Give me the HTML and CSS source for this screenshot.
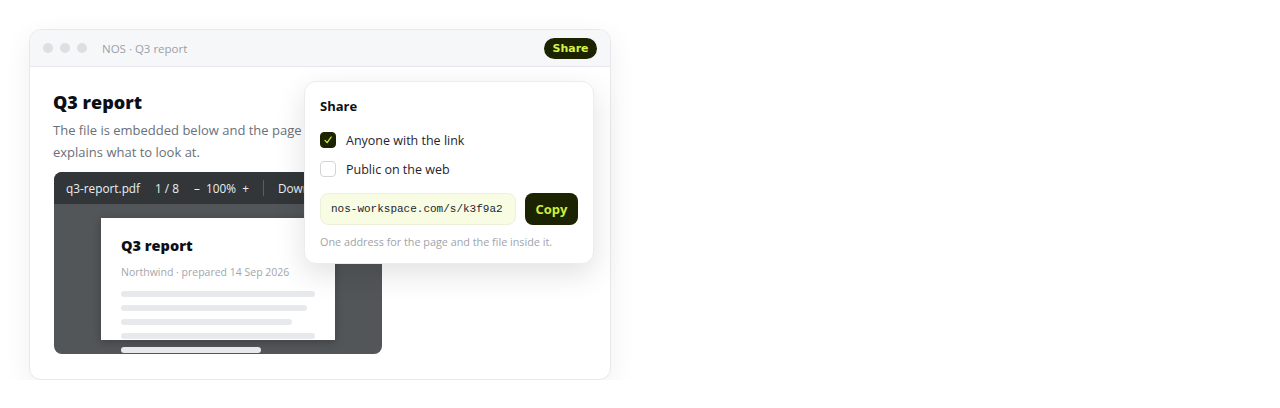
FILE: index.html
```html
<!DOCTYPE html>
<html lang="en">
<head>
<meta charset="utf-8">
<title>NOS · Q3 report</title>
<link rel="stylesheet" href="styles.css">
</head>
<body>
<div class="stage">
  <div class="window">
    <div class="titlebar">
      <span class="dot"></span><span class="dot"></span><span class="dot"></span>
      <span class="wtitle">NOS · Q3 report</span>
      <button class="share-btn">Share</button>
    </div>
    <div class="content">
      <h1 class="heading">Q3 report</h1>
      <p class="lead">The file is embedded below and the page explains what to look at.</p>
      <div class="viewer">
        <div class="vbar">
          <span>q3-report.pdf</span>
          <span>1 / 8</span>
          <span>–&nbsp;&nbsp;100%&nbsp;&nbsp;+</span>
          <span class="sep"></span>
          <span>Download</span>
        </div>
        <div class="varea">
          <div class="page">
            <div class="ptitle">Q3 report</div>
            <div class="psub">Northwind · prepared 14 Sep 2026</div>
            <div class="plines">
              <div class="pline w1"></div>
              <div class="pline w2"></div>
              <div class="pline w3"></div>
              <div class="pline w1"></div>
              <div class="pline w5"></div>
            </div>
          </div>
        </div>
      </div>
    </div>
    <div class="popover">
      <div class="ptit">Share</div>
      <label class="opt"><span class="cb on"><svg width="10" height="10" viewBox="0 0 10 10"><path d="M2 5.4 L4.1 7.7 L8.2 2" fill="none" stroke="#d4f542" stroke-width="1.2" stroke-linecap="round" stroke-linejoin="round"/></svg></span>Anyone with the link</label>
      <label class="opt"><span class="cb"></span>Public on the web</label>
      <div class="linkrow">
        <div class="link">nos-workspace.com/s/k3f9a2</div>
        <button class="copy">Copy</button>
      </div>
      <div class="note">One address for the page and the file inside it.</div>
    </div>
  </div>
</div>
</body>
</html>
```
FILE: styles.css
```css
* { box-sizing: border-box; }
html, body { margin: 0; padding: 0; background: #ffffff; }
body { font-family: "Open Sans", "Noto Sans", "DejaVu Sans", sans-serif; color: #111827; }
.stage { padding: 29px 0 0 29px; }
.window {
  position: relative;
  width: 582px; height: 351px;
  border: 1px solid #e7e8eb; border-radius: 12px;
  background: #fff;
  box-shadow: 0 8px 28px rgba(0,0,0,0.07);
}
.titlebar {
  height: 37px; display: flex; align-items: center;
  padding: 0 13px 0 13px;
  background: #f6f7f9; border-bottom: 1px solid #e6e7ea;
  border-radius: 12px 12px 0 0;
}
.dot { width: 10px; height: 10px; border-radius: 50%; background: #dedfe2; margin-right: 7px; }
.wtitle { margin-left: 8px; font-size: 11.5px; color: #9ca0a8; }
.share-btn {
  margin-left: auto; height: 21px; width: 53px; border: 0; border-radius: 11px;
  background: #1b2300; color: #d6f24c; font: 700 11px "DejaVu Sans", sans-serif; padding: 0;
}
.content { padding: 23px 23px 0 23px; }
.heading { margin: 0; font-size: 18px; line-height: 24px; font-weight: 800; color: #0b0f17; }
.lead { margin: 5px 0 0; width: 262px; font-size: 13px; line-height: 22px; color: #6b7078; }
.viewer {
  margin: 9px 0 0 1px; width: 328px; height: 182px; border-radius: 8px; overflow: hidden;
  background: #525659;
}
.vbar {
  height: 32px; background: #323639; display: flex; align-items: center; gap: 15px;
  padding: 0 12px; color: #eceef0; font-size: 11.8px; white-space: nowrap;
}
.sep { width: 1px; height: 16px; background: #5a5e62; margin: 0 -1px; }
.varea { padding: 14px 0 0 47px; }
.page {
  width: 234px; height: 122px; background: #fff; padding: 18px 20px 0;
  box-shadow: 0 2px 8px rgba(0,0,0,0.25);
}
.ptitle { font-size: 14.5px; line-height: 20px; font-weight: 800; color: #0b0f17; }
.psub { margin-top: 8px; font-size: 10.5px; line-height: 16px; color: #a3a6ad; }
.plines { margin-top: 11px; display: flex; flex-direction: column; gap: 8px; }
.pline { height: 6px; border-radius: 3px; background: #e8e9ec; }
.w1 { width: 194px; } .w2 { width: 186px; } .w3 { width: 171px; } .w5 { width: 140px; }
.popover {
  position: absolute; left: 274px; top: 51px; width: 290px; height: 183px;
  background: #fff; border: 1px solid #ebecef; border-radius: 12px;
  box-shadow: 0 10px 30px rgba(0,0,0,0.12);
  padding: 14px 15px 0;
}
.ptit { font-size: 13px; line-height: 20px; font-weight: 700; color: #0b0f17; }
.opt { display: flex; align-items: center; gap: 10px; height: 20px; font-size: 12.5px; color: #1f2430; }
.opt + .opt { margin-top: 9px; }
.ptit + .opt { margin-top: 14px; }
.cb { width: 16px; height: 16px; border-radius: 4px; border: 1px solid #d3d5da; background: #fff; display: flex; align-items: center; justify-content: center; }
.cb.on { background: #1b2300; border-color: #1b2300; }
.linkrow { display: flex; gap: 9px; margin-top: 14px; }
.link {
  width: 196px; height: 32px; border: 1px solid #edf1dc; background: #f7fce3; border-radius: 8px;
  display: flex; align-items: center; padding-left: 10px;
  font: 11px "Liberation Mono", "DejaVu Sans Mono", monospace; color: #1f2430;
}
.copy {
  width: 53px; height: 32px; border: 0; border-radius: 8px; background: #1b2300; color: #cdef3e;
  font: 700 13px "Open Sans", sans-serif; padding: 0;
}
.note { margin-top: 9px; font-size: 10.8px; line-height: 16px; color: #a0a4ab; }
```
